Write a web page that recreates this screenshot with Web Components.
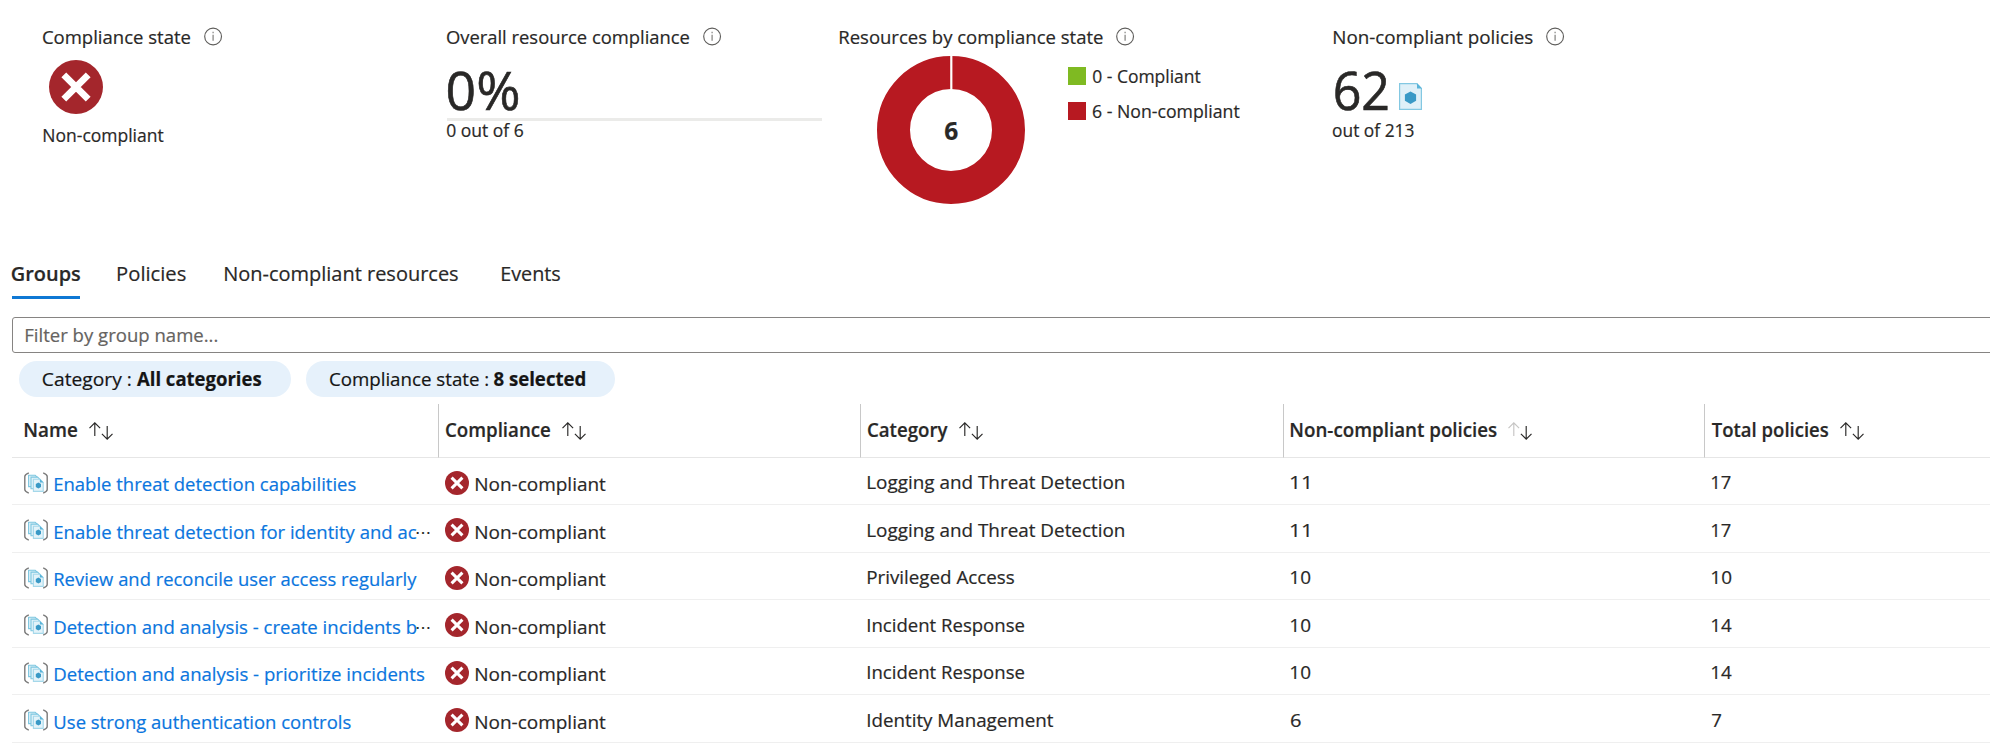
<!DOCTYPE html>
<html lang="en">
<head>
<meta charset="utf-8">
<title>Compliance</title>
<style>
html,body{margin:0;background:#fff;overflow:hidden}
body{font-family:"Open Sans","Noto Sans",sans-serif;color:#292827;height:750px}
</style>
</head>
<body>
<compliance-page></compliance-page>
<script>
const define=(name,html,setup)=>{
  const t=document.createElement('template');t.innerHTML=html;
  customElements.define(name,class extends HTMLElement{
    connectedCallback(){
      if(this.shadowRoot)return;
      this.attachShadow({mode:'open'}).appendChild(t.content.cloneNode(true));
      if(setup)setup(this,this.shadowRoot);
    }
  });
};
const ctx=document.createElement('canvas').getContext('2d');

/* One line of text whose ink spans exactly w pixels: w width, s size, b weight, l line height */
define('fit-text','<style>:host{display:block;flex:none;white-space:nowrap;-webkit-text-stroke:var(--stroke,.2px)}span{display:inline-block;transform-origin:0 0;vertical-align:top}</style><span><slot></slot></span>',(el,r)=>{
  const s=+el.getAttribute('s')||19,b=el.getAttribute('b')||400,w=+el.getAttribute('w'),l=+el.getAttribute('l')||24;
  el.style.cssText+=`;font-size:${s}px;font-weight:${b};width:${w}px;height:${l}px;line-height:${l}px`;
  ctx.font=`${b} ${s*10}px "Open Sans","Noto Sans",sans-serif`;
  const m=ctx.measureText(el.textContent),left=m.actualBoundingBoxLeft/10,k=w/(m.actualBoundingBoxRight/10+left);
  r.querySelector('span').style.transform=`translateX(${left*k}px) scaleX(${k})`;
});

define('info-icon','<style>:host{display:block;width:19px;height:19px;flex:none}svg{display:block}</style><svg width="19" height="19" viewBox="0 0 19 19"><circle cx="9.1" cy="9.5" r="8.4" fill="none" stroke="#5f5e5c" stroke-width="1.15"/><path d="M9.1 7.8v6M9.1 4.8v1.5" stroke="#8b8a88" stroke-width="1.3"/></svg>');

define('fail-icon','<style>:host{display:block;flex:none}svg{display:block;width:100%;height:100%}</style><svg viewBox="0 0 54 54"><circle cx="27" cy="27" r="27" fill="#a4262c"/><path d="M14.8 14.8 39.2 39.2M39.2 14.8 14.8 39.2" stroke="#fff" stroke-width="6.8"/></svg>');

define('policy-icon','<style>:host{display:block;width:23px;height:27px;flex:none}svg{display:block}</style><svg width="23" height="27" viewBox="0 0 23 27"><path d="M.6.6H17.6L22.4 5.4V26.4H.6Z" fill="#dff0f8" stroke="#83c8e2" stroke-width="1.2"/><path d="M18 0 23 5.4H18Z" fill="#59b4d9"/><path d="M11.5 8.6 17.1 11.6V17.8L11.5 21 5.9 17.8V11.6Z" fill="#3999c6"/></svg>');

define('initiative-icon','<style>:host{display:block;width:24px;height:22px;flex:none}svg{display:block}</style><svg width="24" height="22" viewBox="0 0 24 22"><g fill="none" stroke="#7a7a7a" stroke-width="1.4"><path d="M4.8.8C2 1.9 .8 2.6 .8 4.4V17.6C.8 19.4 2 20.1 4.8 21.2"/><path d="M19.2.8C22 1.9 23.2 2.6 23.2 4.4V17.6C23.2 19.4 22 20.1 19.2 21.2"/></g><g fill="#e3f3f9" stroke="#7cc6e0" stroke-width="1.1"><path d="M4.6 3.3H11.2L13.2 5.2V14.6H4.6Z"/><path d="M7 5.1H13.6L16 7.4V16.8H7Z"/><path d="M9.4 7.3H16L19.2 10.4V19.4H9.4Z" stroke="#a5d8ea"/></g><path d="M15.9 7 19.5 10.6H15.9Z" fill="#59b4d9"/><path d="M14.4 10.6 17 12.1V14.9L14.4 16.4 11.8 14.9V12.1Z" fill="#3999c6"/></svg>');

define('sort-icon','<style>:host{display:block;width:24px;height:18px;flex:none}svg{display:block}.up{stroke:#292827}:host([dim]) .up{stroke:#c6c5c4}</style><svg width="24" height="18" viewBox="0 0 24 18" fill="none" stroke="#292827" stroke-width="1.15"><path class="up" d="M5.8 14V.9M.5 6.2 5.8.9 11.1 6.2"/><path d="M18.2 4V17.1M12.9 11.8 18.2 17.1 23.5 11.8"/></svg>');

define('summary-card','<style>:host{display:flex;flex-direction:column;padding-top:25px}.t{display:flex;height:24px;gap:14px}info-icon{margin-top:2px}</style><div class="t"><slot name="title"></slot><info-icon></info-icon></div><slot></slot>');

define('donut-chart','<style>:host{display:grid;width:148px;height:148px;place-items:center;flex:none}svg,fit-text{grid-area:1/1}fit-text{margin-top:1px}</style><svg width="148" height="148"><circle cx="74" cy="74" r="57.5" fill="none" stroke="#b71921" stroke-width="33"/><path d="M74.3 0V34" stroke="#fff" stroke-width="2.2"/></svg><fit-text w="12.5" s="25.5" b="700" l="27">6</fit-text>');

define('legend-item','<style>:host{display:flex;height:18px;gap:6.5px}i{width:18px;height:18px;background:var(--c)}</style><i></i><slot></slot>');

define('tab-item','<style>:host{display:block;height:38px;border-bottom:3px solid transparent}:host([active]){border-color:#0f78d4}</style><slot></slot>');

define('filter-pill','<style>:host{display:flex;height:36px;border-radius:18px;background:#e6f1fb;padding:0 24px;gap:6px;color:#151515;box-sizing:border-box}</style><slot></slot>');

define('head-cell','<style>:host{display:flex;box-sizing:border-box;height:54px;padding-left:6.5px;gap:12px;border-left:1px solid #c8c8c8;border-bottom:1px solid #e6e6e6}:host([first]){border-left:0;padding-left:12.5px}::slotted(sort-icon){margin-top:18px}</style><slot></slot><slot name="sort"></slot>');

const cols='display:grid;grid-template-columns:426px 422px 423px 421px 1fr';
define('policy-row',`<style>:host{${cols};--drop:0px;box-sizing:border-box;border-bottom:1px solid #efefef}
:host([tall]){--drop:1px}
.n{display:flex;padding:14px 0 0 12px;color:#0b76de}.n initiative-icon{margin-right:6.5px}.n fit-text{margin-top:var(--drop)}.n fit-text.more{color:#292827;margin-left:1px}
.s{display:flex;padding:13px 0 0 7px}.s fail-icon{width:24px;height:24px;margin-right:7px}.s fit-text{margin-top:calc(1px + var(--drop))}
.c{padding:calc(12px + var(--drop)) 0 0 7.5px}</style>
<div class="n"><initiative-icon></initiative-icon></div><div class="s"><fail-icon></fail-icon><fit-text w="129.5">Non-compliant</fit-text></div><div class="c k"></div><div class="c a"></div><div class="c b"></div>`,(el,r)=>{
  const [name,nw,cat,cw,a,aw,b,bw,more]=el.data;
  const put=(q,text,w,cls)=>{const f=document.createElement('fit-text');f.setAttribute('w',w);f.textContent=text;if(cls)f.className=cls;r.querySelector(q).append(f)};
  put('.n',name,nw);if(more)put('.n','⋯',12.5,'more');
  put('.k',cat,cw);put('.a',a,aw);put('.b',b,bw);
});

define('policy-table',`<style>:host{display:block;margin:7px 0 0 12px}.h{${cols}}</style>
<div class="h">
<head-cell first><fit-text w="52" b="600" l="52">Name</fit-text><sort-icon slot="sort"></sort-icon></head-cell>
<head-cell><fit-text w="104" b="600" l="52">Compliance</fit-text><sort-icon slot="sort"></sort-icon></head-cell>
<head-cell><fit-text w="79.5" b="600" l="52">Category</fit-text><sort-icon slot="sort"></sort-icon></head-cell>
<head-cell><fit-text w="205.5" b="600" l="52">Non-compliant policies</fit-text><sort-icon dim slot="sort"></sort-icon></head-cell>
<head-cell><fit-text w="116" b="600" l="52">Total policies</fit-text><sort-icon slot="sort"></sort-icon></head-cell>
</div>`,(el,r)=>{
  [['Enable threat detection capabilities',300.5,'Logging and Threat Detection',256,'11',17.5,'17',18.5],
   ['Enable threat detection for identity and ac',361,'Logging and Threat Detection',256,'11',17.5,'17',18.5,1],
   ['Review and reconcile user access regularly',361.5,'Privileged Access',146,'10',19,'10',19],
   ['Detection and analysis - create incidents b',361,'Incident Response',156,'10',19,'14',19.5,1],
   ['Detection and analysis - prioritize incidents',369,'Incident Response',156,'10',19,'14',19.5],
   ['Use strong authentication controls',295.5,'Identity Management',185,'6',9.5,'7',9]
  ].forEach((d,i)=>{const row=document.createElement('policy-row');row.data=d;row.style.height=(i%2?48:47)+'px';row.toggleAttribute('tall',i%2===1);r.append(row)});
});

define('compliance-page',`<style>
:host{display:block;width:1990px}
.sum{display:grid;grid-template-columns:404px 392px 494px 1fr;padding-left:43px;height:258px;box-sizing:border-box}
.big{display:flex;height:58px;--stroke:.6px}
.big fit-text{margin-top:1px}
.bar{width:375px;height:3px;background:#ebebe9}
.chart{display:flex;padding:7px 0 0 38px;gap:43px}
.legend{display:flex;flex-direction:column;gap:17px;padding-top:11px}
.tabs{display:flex;padding-left:12px}
.box{box-sizing:border-box;height:36px;margin:18px -10px 0 12px;border:1px solid #868482;border-radius:3px;padding-left:12.5px;color:#656361}
.pills{display:flex;gap:15px;padding:8px 0 0 19px}
</style>
<section class="sum">
<summary-card><fit-text slot="title" w="147">Compliance state</fit-text>
<fail-icon style="width:54px;height:54px;margin:11px 0 9px 6px"></fail-icon><fit-text w="119.5" s="17.8" style="margin-left:.7px">Non-compliant</fit-text></summary-card>
<summary-card><fit-text slot="title" w="242">Overall resource compliance</fit-text>
<div class="big" style="margin:11px 0 0 1px"><fit-text w="70" s="53" l="58">0%</fit-text></div><div class="bar"></div><fit-text w="76" s="17.8" l="18">0 out of 6</fit-text></summary-card>
<summary-card><fit-text slot="title" w="262.5" style="margin-left:.5px">Resources by compliance state</fit-text>
<div class="chart"><donut-chart></donut-chart><div class="legend">
<legend-item style="--c:#7fba22"><fit-text w="107.5" s="17.8" l="18">0 - Compliant</fit-text></legend-item>
<legend-item style="--c:#b71921"><fit-text w="146.5" s="17.8" l="18">6 - Non-compliant</fit-text></legend-item></div></div></summary-card>
<summary-card><fit-text slot="title" w="198.5" style="margin-left:.7px">Non-compliant policies</fit-text>
<div class="big" style="margin:11px 0 3px 2px"><fit-text w="53" s="53" l="58">62</fit-text><policy-icon style="margin:23px 0 0 11px"></policy-icon></div><fit-text w="80.5" s="17.8" l="18">out of 213</fit-text></summary-card>
</section>
<nav class="tabs">
<tab-item active><fit-text w="68" s="20.3" b="600" l="30">Groups</fit-text></tab-item>
<tab-item style="margin-left:37.5px"><fit-text w="67.5" s="20.3" l="30">Policies</fit-text></tab-item>
<tab-item style="margin-left:40px"><fit-text w="233" s="20.3" l="30">Non-compliant resources</fit-text></tab-item>
<tab-item style="margin-left:44px"><fit-text w="58" s="20.3" l="30">Events</fit-text></tab-item>
</nav>
<div class="box"><fit-text w="191" l="34">Filter by group name...</fit-text></div>
<div class="pills">
<filter-pill style="width:272px"><fit-text w="87.5" s="18.7" l="36">Category :</fit-text><fit-text w="124" s="18.7" b="700" l="36">All categories</fit-text></filter-pill>
<filter-pill style="width:309px"><fit-text w="158" s="18.7" l="36">Compliance state :</fit-text><fit-text w="91" s="18.7" b="700" l="36">8 selected</fit-text></filter-pill>
</div>
<policy-table></policy-table>`);
</script>
</body>
</html>
